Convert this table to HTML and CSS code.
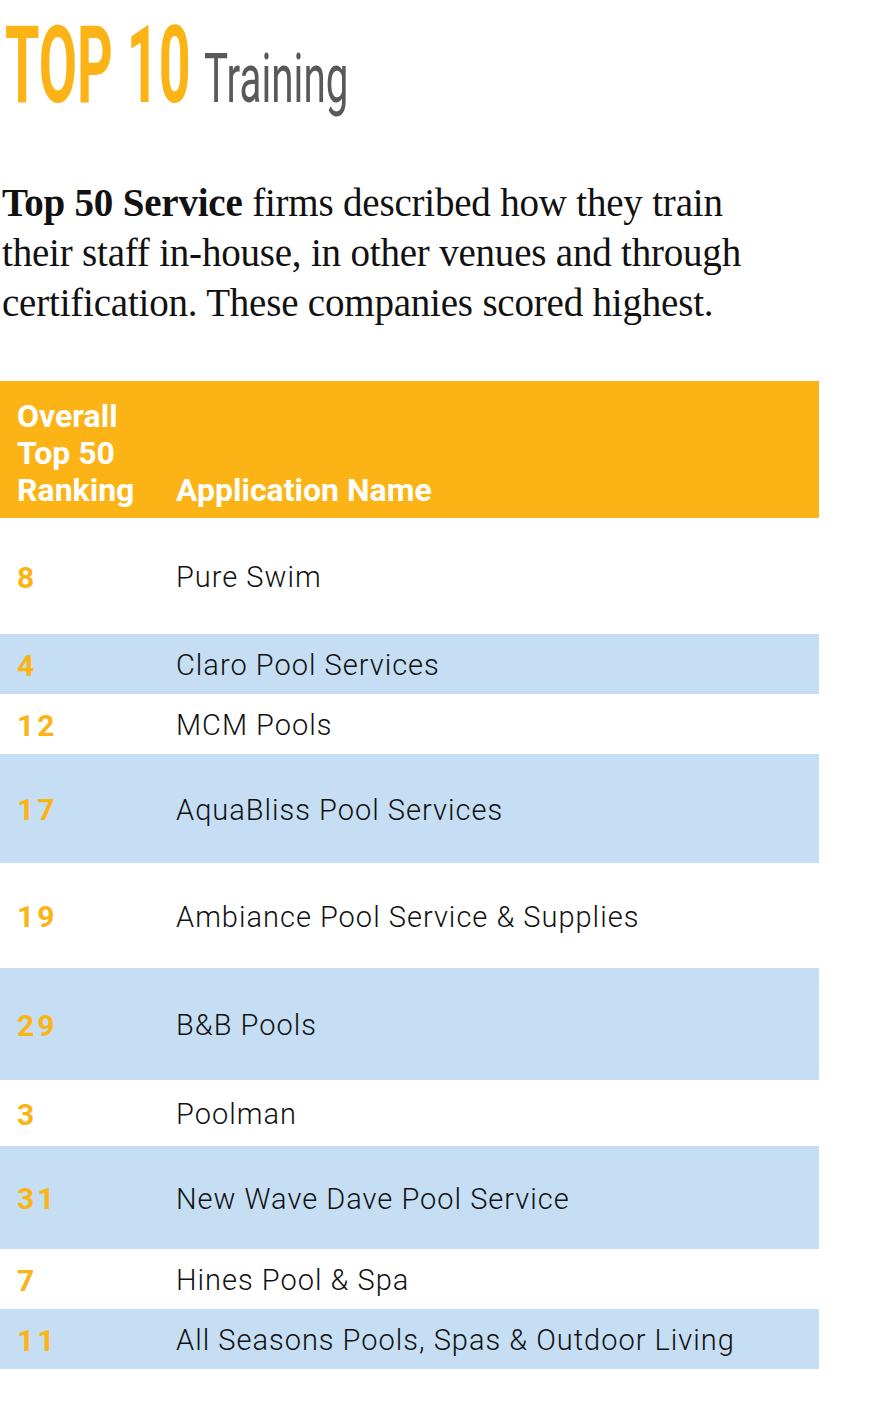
FILE: index.html
```html
<!DOCTYPE html>
<html lang="en">
<head>
<meta charset="utf-8">
<title>Top 10 Training</title>
<link rel="stylesheet" href="styles.css">
</head>
<body>
<div class="page">
  <h1 class="title">
    <span class="title-top">TOP 10</span>
    <span class="title-sub">Training</span>
  </h1>
  <p class="intro"><strong>Top 50 Service</strong> firms described how they train<br>their staff in-house, in other venues and through<br>certification. These companies scored highest.</p>
  <div class="table">
    <div class="row head">
      <div class="rank">Overall<br>Top 50<br>Ranking</div>
      <div class="name">Application Name</div>
    </div>
    <div class="row r1"><div class="rank">8</div><div class="name">Pure Swim</div></div>
    <div class="row r2 alt"><div class="rank">4</div><div class="name">Claro Pool Services</div></div>
    <div class="row r3"><div class="rank">12</div><div class="name">MCM Pools</div></div>
    <div class="row r4 alt"><div class="rank">17</div><div class="name">AquaBliss Pool Services</div></div>
    <div class="row r5"><div class="rank">19</div><div class="name">Ambiance Pool Service &amp; Supplies</div></div>
    <div class="row r6 alt"><div class="rank">29</div><div class="name">B&amp;B Pools</div></div>
    <div class="row r7"><div class="rank">3</div><div class="name">Poolman</div></div>
    <div class="row r8 alt"><div class="rank">31</div><div class="name">New Wave Dave Pool Service</div></div>
    <div class="row r9"><div class="rank">7</div><div class="name">Hines Pool &amp; Spa</div></div>
    <div class="row r10 alt"><div class="rank">11</div><div class="name">All Seasons Pools, Spas &amp; Outdoor Living</div></div>
  </div>
</div>
</body>
</html>
```

FILE: styles.css
```css
html, body {
  margin: 0;
  padding: 0;
  background: #ffffff;
}

.page {
  width: 870px;
  min-height: 1401px;
}

.title {
  display: flex;
  align-items: baseline;
  margin: 11px 0 0 0;
  padding-left: 5px;
  height: 108px;
  line-height: 108px;
  font-family: Roboto, "Liberation Sans", sans-serif;
  font-weight: 400;
  white-space: nowrap;
}

.title-top {
  flex: none;
  width: 199px;
  font-size: 108px;
  font-weight: 700;
  color: #fcb316;
  transform: scaleX(0.515);
  transform-origin: left center;
}

.title-sub {
  flex: none;
  font-size: 69px;
  font-weight: 400;
  color: #58595b;
  transform: scaleX(0.585);
  transform-origin: left center;
}

.intro {
  margin: 59px 0 0 2px;
  font-family: "Liberation Serif", "Times New Roman", serif;
  font-size: 39px;
  line-height: 50px;
  color: #111111;
  letter-spacing: -0.2px;
}

.intro strong {
  font-weight: 700;
}

.table {
  margin-top: 53px;
  width: 819px;
  font-family: Roboto, "Liberation Sans", sans-serif;
}

.row {
  box-sizing: border-box;
  display: flex;
  align-items: center;
  font-size: 29px;
  padding-top: 2px;
}

.row .rank {
  flex: none;
  width: 159px;
  padding-left: 17px;
  font-size: 30px;
  font-weight: 700;
  letter-spacing: 3px;
  color: #fcb316;
}

.row .name {
  color: #111111;
  font-weight: 300;
  letter-spacing: 1px;
}

.row.alt {
  background: #c6def3;
}

.row.head {
  align-items: flex-end;
  background: #fcb316;
  padding: 17px 0 9px 0;
  font-size: 32px;
  line-height: 37px;
}

.row.head .rank,
.row.head .name {
  color: #ffffff;
  font-size: 32px;
  font-weight: 700;
  letter-spacing: 0;
}

.r1 { height: 116px; }
.r2 { height: 60px; }
.r3 { height: 60px; }
.r4 { height: 109px; }
.r5 { height: 105px; }
.r6 { height: 112px; }
.r7 { height: 66px; }
.r8 { height: 103px; }
.r9 { height: 60px; }
.r10 { height: 60px; }
```
